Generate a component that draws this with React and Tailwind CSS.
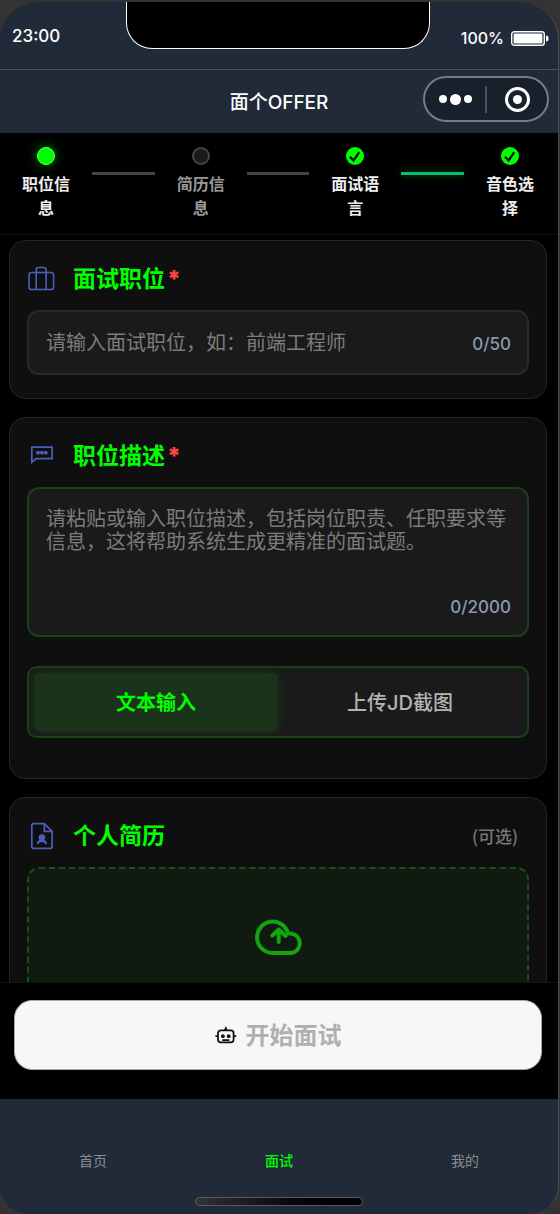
import React, { useState } from "react";

const STEPS = [
  { label: "职位信息", state: "current" },
  { label: "简历信息", state: "pending" },
  { label: "面试语言", state: "done" },
  { label: "音色选择", state: "done" },
];

function BriefcaseIcon() {
  return (
    <svg className="size-7 shrink-0 text-[#4c5fb8]" viewBox="0 0 28 28" fill="none" stroke="currentColor" strokeWidth="1.6" aria-hidden="true">
      <rect x="2" y="7.5" width="24.6" height="17" rx="2.6" />
      <path d="M9.2 24.5V4.8a2.3 2.3 0 0 1 2.3-2.3h5.3a2.3 2.3 0 0 1 2.3 2.3v19.7" />
    </svg>
  );
}

function ChatIcon() {
  return (
    <svg className="size-7 shrink-0 text-[#4c5fb8]" viewBox="0 0 28 28" fill="none" stroke="currentColor" strokeWidth="1.7" aria-hidden="true">
      <path d="M4.8 5.2h20.3v11.4H9L4.8 20.2z" />
      <g fill="currentColor" stroke="none">
        <circle cx="11" cy="10.8" r="2" />
        <circle cx="14.9" cy="10.8" r="2" />
        <circle cx="18.8" cy="10.8" r="2" />
      </g>
    </svg>
  );
}

function ResumeIcon() {
  return (
    <svg className="size-7 shrink-0 text-[#4c5fb8]" viewBox="0 0 28 28" fill="none" stroke="currentColor" strokeWidth="1.7" aria-hidden="true">
      <path d="M17.3 1.6H6.3a1.5 1.5 0 0 0-1.5 1.5v21.8a1.5 1.5 0 0 0 1.5 1.5h17.3a1.5 1.5 0 0 0 1.5-1.5V9.4zM17.3 1.6v7.8h7.8" />
      <circle cx="14.9" cy="15.6" r="3.3" fill="currentColor" stroke="none" />
      <path d="M10.8 22c.1-2 1.4-3.2 4.1-3.2s4 1.2 4.1 3.2" strokeWidth="2.2" />
    </svg>
  );
}

function CloudUploadIcon() {
  return (
    <svg className="h-9 w-12 text-[#11a511]" viewBox="0 0 48 36" fill="none" stroke="currentColor" strokeWidth="4" strokeLinejoin="round" aria-hidden="true">
      <path d="M18.4 34A15.7 15.7 0 1 1 34 14.5h3a9.8 9.8 0 0 1 0 19.5z" />
      <path d="M24.7 23V11M18.4 16.5l6.3-6 7 6.5" strokeLinecap="round" strokeWidth="4" />
    </svg>
  );
}

function RobotIcon() {
  return (
    <svg className="h-[18px] w-[22px] shrink-0 text-[#111]" viewBox="0 0 22 18" fill="none" stroke="currentColor" strokeWidth="1.8" aria-hidden="true">
      <rect x="3" y="4.4" width="15.6" height="12" rx="2.8" />
      <path d="M.4 10.2H3M18.6 10.2h2.6M7.2 14.1h7.2" />
      <path d="M10.8 0l1.8 4H9z" fill="currentColor" stroke="none" />
      <circle cx="7.9" cy="10.2" r="1.9" fill="currentColor" stroke="none" />
      <circle cx="13.7" cy="10.2" r="1.9" fill="currentColor" stroke="none" />
    </svg>
  );
}

function StepMark({ state }) {
  if (state === "done") {
    return (
      <svg className="size-[18px]" viewBox="0 0 18 18" aria-hidden="true">
        <circle cx="9" cy="9" r="9" fill="#00ff00" />
        <path d="M4 9.8l3.6 3.8 5.6-8.4" fill="none" stroke="#000" strokeWidth="2.2" />
      </svg>
    );
  }
  return state === "current" ? (
    <span className="size-[18px] rounded-full border border-[#66ff66] bg-[#00ff00] shadow-[0_0_12px_rgba(0,255,0,0.5)]" />
  ) : (
    <span className="size-[18px] rounded-full border-2 border-[#444] bg-[#1a1a1a]" />
  );
}

function Steps() {
  return (
    <ol className="flex items-start border-b border-[#031d03] bg-black py-3.5 pr-0.5">
      {STEPS.map((step, i) => (
        <React.Fragment key={step.label}>
          {i > 0 && (
            <li
              aria-hidden="true"
              className={
                "mt-[25px] h-[3px] flex-1 " +
                (i === 3 ? "bg-[#10b981] shadow-[0_0_6px_rgba(0,255,0,0.4)]" : "bg-[#444]")
              }
            />
          )}
          <li className="flex w-[92px] shrink-0 flex-col items-center gap-[7px]">
            <StepMark state={step.state} />
            <span
              className={
                "w-12 text-center text-base leading-6 font-bold " +
                (step.state === "pending" ? "text-[#999]" : "text-[#eee]")
              }
            >
              {step.label}
            </span>
          </li>
        </React.Fragment>
      ))}
    </ol>
  );
}

function Card({ icon, title, htmlFor, required, note, className, children }) {
  return (
    <section className={"rounded-2xl border border-[#252525] bg-[#0f0f0f] px-[17px] pt-5 " + className}>
      <div className="mb-[13px] flex h-9 items-center">
        {icon}
        <h2 className="ml-[18px] text-[23px] leading-9 font-bold text-[#00ff00]">
          <label htmlFor={htmlFor}>{title}</label>
          {required && <span className="ml-0.5 font-black text-[#ff4444]">*</span>}
        </h2>
        {note && (
          <span className="ml-auto pr-[11px] font-['Noto_Sans_CJK_SC',sans-serif] text-[17px] font-medium text-[#777]">
            {note}
          </span>
        )}
      </div>
      {children}
    </section>
  );
}

function StatusBar() {
  return (
    <div className="grid h-[67px] grid-cols-[126px_304px_1fr] items-start">
      <span className="pt-[22px] pl-3 text-[17px] leading-6 font-medium text-white">23:00</span>
      <div className="h-[47px] rounded-b-[26px] border border-t-0 border-white bg-black" />
      <div className="flex items-center justify-end gap-[7px] pt-6 pr-[9px]">
        <span className="text-base leading-6 font-medium text-white">100%</span>
        <svg className="h-[15px] w-[38px]" viewBox="0 0 38 15" aria-label="电量">
          <rect x=".7" y=".7" width="32.6" height="13.6" rx="2.6" fill="none" stroke="#fff" strokeWidth="1.4" />
          <rect x="2.6" y="2.6" width="28.8" height="9.8" rx="1.2" fill="#fff" />
          <path d="M35 4.5c1.7 0 2.6 1.2 2.6 3s-.9 3-2.6 3z" fill="#fff" />
        </svg>
      </div>
    </div>
  );
}

function NavBar() {
  return (
    <header className="grid h-16 grid-cols-[1fr_auto_1fr] items-start border-t border-[#4a5361]">
      <span />
      <h1 className="pt-[21px] text-[19px] leading-6 font-medium text-white">面个OFFER</h1>
      <div className="mt-1.5 mr-[9px] flex h-[46px] w-[126px] items-center justify-self-end rounded-full border-2 border-[#777b82] bg-[#18202b]">
        <button type="button" aria-label="更多" className="flex flex-1 items-center justify-center gap-[3px]">
          <span className="size-2 rounded-full bg-white" />
          <span className="size-[11px] rounded-full bg-white" />
          <span className="size-2 rounded-full bg-white" />
        </button>
        <span className="h-[27px] w-0.5 bg-[#4c535d]" />
        <button type="button" aria-label="关闭" className="flex flex-1 items-center justify-center">
          <span className="flex size-[25px] items-center justify-center rounded-full border-3 border-white">
            <span className="size-[9px] rounded-full bg-white" />
          </span>
        </button>
      </div>
    </header>
  );
}

export default function App() {
  const [job, setJob] = useState("");
  const [desc, setDesc] = useState("");
  const [mode, setMode] = useState("text");
  const tabOn = "rounded-md bg-[#1b331b] pt-0.5 font-bold text-[#00ff00] shadow-[0_0_8px_rgba(0,255,0,0.15)]";
  const tabOff = "rounded-md pt-0.5 font-medium text-[#b3b3b3]";

  return (
    <div className="h-screen bg-[#333] pt-0.5 pr-px font-['Inter','Noto_Sans_CJK_SC',sans-serif]">
      <div className="flex h-full flex-col overflow-hidden rounded-t-[38px] rounded-b-[28px] border-r border-[#4a4e54] bg-[#212a38]">
        <StatusBar />
        <NavBar />
        <Steps />
        <main className="flex min-h-0 flex-1 flex-col gap-[18px] overflow-y-auto bg-black pt-[5px] pr-[11px] pl-[9px] [scrollbar-width:none]">
          <Card icon={<BriefcaseIcon />} title="面试职位" htmlFor="job" required className="shrink-0 pb-[23px]">
            <div className="flex h-[65px] items-center rounded-xl border-2 border-[#292929] bg-[#1a1a1a] pr-4 pl-[17px]">
              <input
                id="job"
                value={job}
                maxLength={50}
                onChange={(e) => setJob(e.target.value)}
                placeholder="请输入面试职位，如：前端工程师"
                className="min-w-0 flex-1 bg-transparent text-xl text-white outline-none placeholder:text-[#7c7c7c]"
              />
              <span className="pt-0.5 text-[17px] leading-6 font-medium text-[#8a99af]">{job.length}/50</span>
            </div>
          </Card>

          <Card icon={<ChatIcon />} title="职位描述" htmlFor="desc" required className="shrink-0 pb-10">
            <div className="flex h-[150px] flex-col rounded-xl border-2 border-[#1a401a] bg-[#1a1a1a] pt-[19px] pr-4 pb-4 pl-[17px]">
              <textarea
                id="desc"
                value={desc}
                maxLength={2000}
                onChange={(e) => setDesc(e.target.value)}
                placeholder="请粘贴或输入职位描述，包括岗位职责、任职要求等信息，这将帮助系统生成更精准的面试题。"
                className="min-h-0 flex-1 resize-none overflow-hidden bg-transparent text-xl leading-[23px] text-white outline-none placeholder:text-[#7c7c7c]"
              />
              <span className="self-end text-[17px] leading-6 font-medium text-[#8a99af]">{desc.length}/2000</span>
            </div>
            <div role="tablist" className="mt-[29px] grid h-[72px] grid-cols-2 rounded-[10px] border-2 border-[#1a401a] bg-[#1a1a1a] p-[5px] text-xl">
              <button type="button" role="tab" aria-selected={mode === "text"} onClick={() => setMode("text")} className={mode === "text" ? tabOn : tabOff}>
                文本输入
              </button>
              <button type="button" role="tab" aria-selected={mode === "image"} onClick={() => setMode("image")} className={mode === "image" ? tabOn : tabOff}>
                上传JD截图
              </button>
            </div>
          </Card>

          <Card icon={<ResumeIcon />} title="个人简历" htmlFor="resume" note="(可选)" className="shrink-0 pb-6">
            <button id="resume" type="button" aria-label="上传简历" className="flex h-52 w-full justify-center rounded-xl border-2 border-dashed border-[#155215] bg-[#111a11] pt-[50px]">
              <CloudUploadIcon />
            </button>
          </Card>
        </main>

        <div className="border-t border-[#031d03] bg-black pt-[17px] pr-4 pb-[29px] pl-3.5">
          <button type="button" className="flex h-[70px] w-full items-center justify-center gap-[9px] rounded-[18px] border border-[#aaa] bg-[#f7f7f7] text-2xl font-bold text-[#b0b0b0]">
            <RobotIcon />
            <span className="pt-0.5">开始面试</span>
          </button>
        </div>

        <footer className="flex h-[115px] flex-col items-center justify-end pb-2">
          <nav className="mb-[25px] grid w-full grid-cols-3 text-center text-sm leading-[22px] text-[#8c8c8c]">
            <a href="#home">首页</a>
            <a href="#interview" aria-current="page" className="font-medium text-[#00ff00]">面试</a>
            <a href="#mine">我的</a>
          </nav>
          <div className="h-[9px] w-[168px] rounded-full border border-[#5a5a5e] bg-linear-to-r from-[#333] to-black" />
        </footer>
      </div>
    </div>
  );
}
